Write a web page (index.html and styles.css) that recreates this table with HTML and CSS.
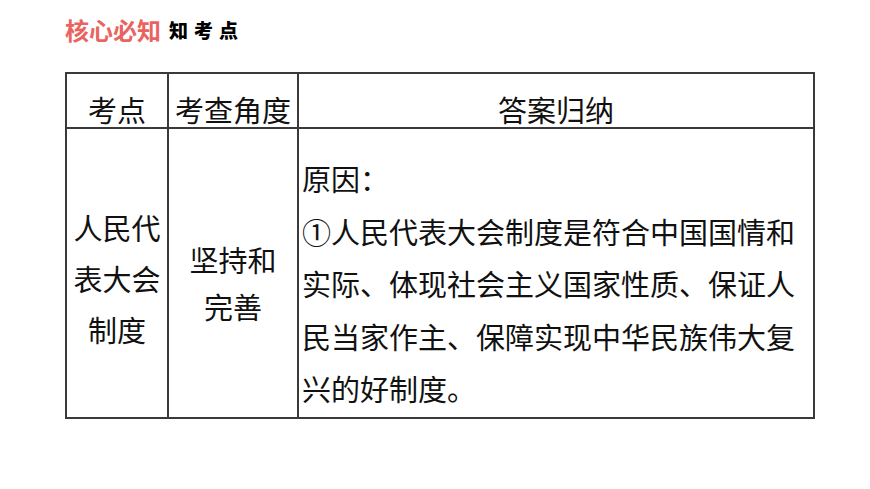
FILE: index.html
```html
<!DOCTYPE html>
<html lang="zh-CN">
<head>
<meta charset="utf-8">
<link rel="stylesheet" href="styles.css">
</head>
<body>
<div class="page">
  <div class="title">
    <span class="title-main">核心必知</span>
    <span class="title-sub">知考点</span>
  </div>
  <table class="grid">
    <colgroup>
      <col class="c1"><col class="c2"><col class="c3">
    </colgroup>
    <tr class="head">
      <th>考点</th>
      <th>考查角度</th>
      <th>答案归纳</th>
    </tr>
    <tr class="body">
      <td class="center l1">人民代<br>表大会<br>制度</td>
      <td class="center l2">坚持和<br>完善</td>
      <td class="answer">原因：<br>①人民代表大会制度是符合中国国情和<br>实际、体现社会主义国家性质、保证人<br>民当家作主、保障实现中华民族伟大复<br>兴的好制度。</td>
    </tr>
  </table>
</div>
</body>
</html>
```
FILE: styles.css
```css
html, body {
  margin: 0;
  padding: 0;
  background: #ffffff;
}
.page {
  width: 870px;
  height: 489px;
  padding: 15px 0 0 65px;
  box-sizing: border-box;
  font-family: "Noto Sans CJK SC", "Noto Sans", sans-serif;
  color: #111;
}
.title {
  display: flex;
  align-items: center;
  height: 30px;
  gap: 8px;
}
.title-main {
  font-size: 24px;
  font-weight: 700;
  color: #e9645f;
  line-height: 30px;
}
.title-sub {
  font-size: 19px;
  font-weight: 900;
  color: #000;
  letter-spacing: 6px;
  line-height: 30px;
}
.grid {
  margin-top: 27px;
  border-collapse: collapse;
  width: 748px;
  table-layout: fixed;
}
.c1 { width: 102px; }
.c2 { width: 130px; }
.c3 { width: 516px; }
.grid th, .grid td {
  border: 2px solid #3a3a3a;
  padding: 0;
  font-size: 29px;
  font-weight: 400;
  color: #111;
}
.grid .head th {
  text-align: center;
  vertical-align: top;
  line-height: 35px;
  padding-top: 18px;
}
.grid .body td {
  height: 290px;
  vertical-align: top;
  box-sizing: border-box;
}
.grid .center {
  text-align: center;
}
.grid .l1 { line-height: 51px; padding-top: 73px; }
.grid .l2 { line-height: 47px; padding-top: 107px; }
.grid .answer {
  line-height: 52.5px;
  padding-top: 23px;
  padding-left: 3px;
  white-space: nowrap;
  text-align: left;
}
```
